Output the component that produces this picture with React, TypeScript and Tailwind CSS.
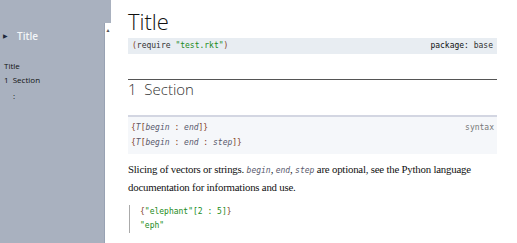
import React from "react";

const mono = "font-['DejaVu_Sans_Mono','Liberation_Mono',monospace]";
const sans = "font-['Open_Sans','Noto_Sans',sans-serif]";
const serif = "font-['Liberation_Serif','DejaVu_Serif',serif]";

function Pn({ children }: { children: React.ReactNode }) {
  return <span className="text-[#843c24]">{children}</span>;
}

function Var({ children }: { children: React.ReactNode }) {
  return <span className="italic text-[#5a5a6e]">{children}</span>;
}

function Val({ children }: { children: React.ReactNode }) {
  return <span className="text-[#228b22]">{children}</span>;
}

export default function App() {
  return (
    <div className="flex h-[243px] w-[517px] overflow-hidden bg-white">
      {/* table of contents */}
      <aside className={`w-[104px] shrink-0 bg-[#a9b1bf] ${sans}`}>
        <div className="mt-[31px] flex items-center gap-[9px] pl-[3px]">
          <span className="text-[6px] leading-none text-[#1e2a3a]">▶</span>
          <span className="text-[10px] font-semibold leading-none text-[#f4f6f8]">Title</span>
        </div>
        <div className="mt-[18px] pl-[4px] text-[8px] leading-[14px] text-[#111]">
          <div>Title</div>
          <div>1&nbsp;&nbsp;Section</div>
          <div className="pl-[9px] pt-[2px]">:</div>
        </div>
      </aside>

      {/* scroll strip */}
      <div className="flex w-[7px] shrink-0 flex-col">
        <div className="h-[23px] bg-[#a9b1bf]" />
        <div className="flex-1 border-l border-[#98a2b3] bg-white pt-[5px] text-center text-[5px] leading-none text-[#555]">
          ▲
        </div>
      </div>

      <main className="min-w-0 flex-1 pl-[17px] pr-[20px]">
        <h1 className={`mt-[7px] text-[22px] font-light leading-[28px] text-[#111] ${sans}`}>Title</h1>

        <div className={`mt-[3px] flex h-[16px] items-center justify-between bg-[#e8edf2] px-[4px] text-[8px] ${mono}`}>
          <span>
            <Pn>(</Pn>
            <span className="text-[#333]">require</span> <Val>"test.rkt"</Val>
            <Pn>)</Pn>
          </span>
          <span className="text-[#333]">
            <span className="text-[#111]">package:</span> base
          </span>
        </div>

        <div className="mt-[25px] border-t border-[#555]">
          <h2 className={`text-[15px] font-light leading-[19px] text-[#333] ${sans}`}>
            1&nbsp;&nbsp;Section
          </h2>
        </div>

        <div className={`mt-[16px] border-t-2 border-[#d3d6e2] bg-[#f5f7fa] px-[3px] pt-[3px] pb-[4px] text-[8px] leading-[15px] ${mono}`}>
          <div className="flex justify-between">
            <span>
              <Pn>{"{"}</Pn>
              <Var>T</Var>
              <Pn>[</Pn>
              <Var>begin</Var> <Pn>:</Pn> <Var>end</Var>
              <Pn>]{"}"}</Pn>
            </span>
            <span className="text-[#777]">syntax</span>
          </div>
          <div>
            <Pn>{"{"}</Pn>
            <Var>T</Var>
            <Pn>[</Pn>
            <Var>begin</Var> <Pn>:</Pn> <Var>end</Var> <Pn>:</Pn> <Var>step</Var>
            <Pn>]{"}"}</Pn>
          </div>
        </div>

        <p className={`mt-[7px] whitespace-nowrap text-[10.8px] tracking-[-0.2px] leading-[17px] text-[#111] ${serif}`}>
          Slicing of vectors or strings. <span className={`text-[8px] tracking-normal italic text-[#5a5a6e] ${mono}`}>begin</span>,{" "}
          <span className={`text-[8px] tracking-normal italic text-[#5a5a6e] ${mono}`}>end</span>,{" "}
          <span className={`text-[8px] tracking-normal italic text-[#5a5a6e] ${mono}`}>step</span> are optional, see the Python language
          <br />
          documentation for informations and use.
        </p>

        <div className={`ml-[1px] mt-[9px] border-l border-[#aaa] pl-[10px] text-[8px] leading-[14px] ${mono}`}>
          <div>
            <Pn>{"{"}</Pn>
            <Val>"elephant"[2 : 5]</Val>
            <Pn>{"}"}</Pn>
          </div>
          <div>
            <Val>"eph"</Val>
          </div>
        </div>
      </main>
    </div>
  );
}
